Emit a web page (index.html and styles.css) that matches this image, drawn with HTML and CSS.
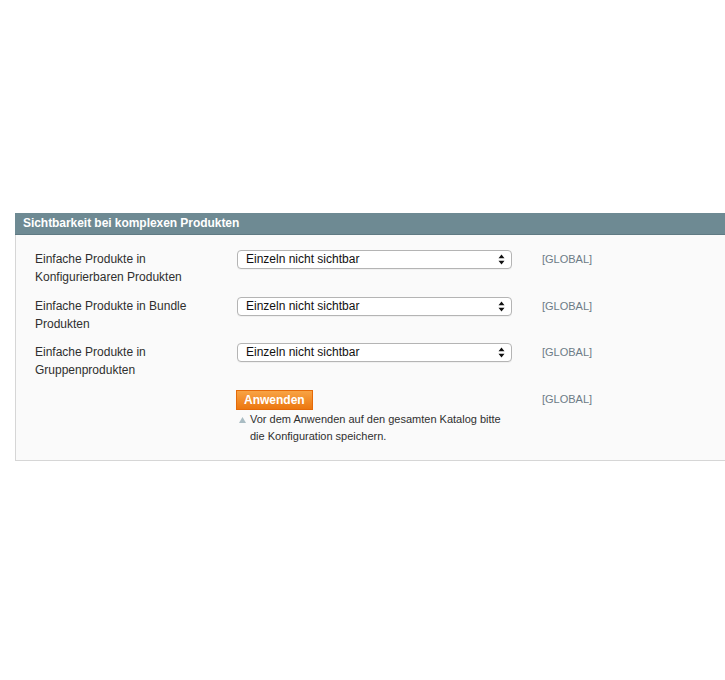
FILE: index.html
```html
<!DOCTYPE html>
<html lang="de">
<head>
<meta charset="utf-8">
<title>Sichtbarkeit bei komplexen Produkten</title>
<link rel="stylesheet" href="styles.css">
</head>
<body>
<div class="page">
  <section class="panel">
    <h2 class="panel-head">Sichtbarkeit bei komplexen Produkten</h2>
    <div class="panel-body">
      <div class="row">
        <div class="label">Einfache Produkte in<br>Konfigurierbaren Produkten</div>
        <div class="value">
          <div class="select"><span>Einzeln nicht sichtbar</span>
            <svg class="arrows" width="7" height="11" viewBox="0 0 7 11"><path d="M3.5 0.5 L6.5 4.2 H0.5 Z M3.5 10.5 L6.5 6.8 H0.5 Z" fill="#111"/></svg>
          </div>
        </div>
        <div class="scope">[GLOBAL]</div>
      </div>
      <div class="row">
        <div class="label">Einfache Produkte in Bundle<br>Produkten</div>
        <div class="value">
          <div class="select"><span>Einzeln nicht sichtbar</span>
            <svg class="arrows" width="7" height="11" viewBox="0 0 7 11"><path d="M3.5 0.5 L6.5 4.2 H0.5 Z M3.5 10.5 L6.5 6.8 H0.5 Z" fill="#111"/></svg>
          </div>
        </div>
        <div class="scope">[GLOBAL]</div>
      </div>
      <div class="row">
        <div class="label">Einfache Produkte in<br>Gruppenprodukten</div>
        <div class="value">
          <div class="select"><span>Einzeln nicht sichtbar</span>
            <svg class="arrows" width="7" height="11" viewBox="0 0 7 11"><path d="M3.5 0.5 L6.5 4.2 H0.5 Z M3.5 10.5 L6.5 6.8 H0.5 Z" fill="#111"/></svg>
          </div>
        </div>
        <div class="scope">[GLOBAL]</div>
      </div>
      <div class="row last">
        <div class="label"></div>
        <div class="value">
          <button class="btn">Anwenden</button>
          <p class="note"><svg class="tri" width="7" height="6" viewBox="0 0 7 6"><path d="M3.5 0 L7 6 H0 Z" fill="#a9bcc3"/></svg>Vor dem Anwenden auf den gesamten Katalog bitte<br>die Konfiguration speichern.</p>
        </div>
        <div class="scope">[GLOBAL]</div>
      </div>
    </div>
  </section>
</div>
</body>
</html>
```

FILE: styles.css
```css
html, body {
  margin: 0;
  padding: 0;
  background: #ffffff;
  overflow: hidden;
}
body {
  font-family: "Liberation Sans", Arial, Helvetica, sans-serif;
  font-size: 12px;
  color: #2f2f2f;
}
.page {
  width: 725px;
  height: 680px;
  padding-top: 213px;
  padding-left: 15px;
  box-sizing: border-box;
}
.panel {
  width: 740px;
  background: #fafafa;
  border: 1px solid #d6d6d6;
  border-top: 0;
  box-sizing: border-box;
}
.panel-head {
  margin: 0 -1px;
  height: 22px;
  line-height: 21px;
  padding-left: 8px;
  background: #6e8a93;
  border-bottom: 1px solid #5f7a83;
  color: #ffffff;
  font-size: 12px;
  font-weight: bold;
  letter-spacing: -0.05px;
  box-sizing: border-box;
}
.panel-body {
  padding: 15px 0 15px 19px;
  display: flex;
  flex-direction: column;
  gap: 10.5px;
}
.row {
  display: flex;
  align-items: flex-start;
}
.label {
  width: 202px;
  line-height: 18px;
  min-height: 36px;
}
.value {
  width: 275px;
}
.select {
  height: 19px;
  background: #ffffff;
  border: 1px solid #b4b4b4;
  border-radius: 4px;
  box-sizing: border-box;
  display: flex;
  align-items: center;
  justify-content: space-between;
  padding: 0 6px 0 8px;
  font-size: 12px;
  color: #111;
  box-shadow: 0 1px 0 rgba(0,0,0,0.04);
}
.select span {
  line-height: 17px;
}
.arrows {
  display: block;
}
.scope {
  margin-left: 30px;
  font-size: 11px;
  line-height: 19px;
  color: #6c7b86;
}
.row.last .scope {
  line-height: 18px;
}
.btn {
  display: block;
  height: 20px;
  padding: 0 7px;
  margin: 0;
  border: 1px solid #e56a08;
  background: linear-gradient(#f8a344, #ec7710);
  color: #ffffff;
  font-family: "Liberation Sans", Arial, Helvetica, sans-serif;
  font-size: 12px;
  font-weight: bold;
  line-height: 18px;
  box-sizing: border-box;
  margin-left: -1px;
}
.note {
  margin: 1px 0 0 0;
  font-size: 11px;
  line-height: 17px;
  padding-left: 13px;
  position: relative;
  color: #2f2f2f;
}
.tri {
  position: absolute;
  left: 2px;
  top: 6px;
}
```
